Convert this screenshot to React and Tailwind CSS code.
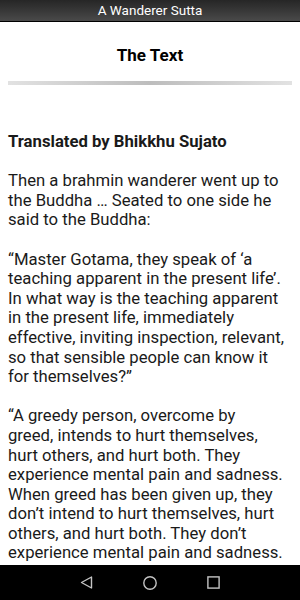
import React from "react";

const paragraphs = [
  "Then a brahmin wanderer went up to the Buddha … Seated to one side he said to the Buddha:",
  "“Master Gotama, they speak of ‘a teaching apparent in the present life’. In what way is the teaching apparent in the present life, immediately effective, inviting inspection, relevant, so that sensible people can know it for themselves?”",
  "“A greedy person, overcome by greed, intends to hurt themselves, hurt others, and hurt both. They experience mental pain and sadness. When greed has been given up, they don’t intend to hurt themselves, hurt others, and hurt both. They don’t experience mental pain and sadness.",
];

const App = () => {
  return (
    <div className="w-[300px] h-[600px] flex flex-col bg-white font-['Roboto',sans-serif] overflow-hidden">
      <div className="h-[22px] shrink-0 bg-gradient-to-b from-[#262626] to-[#4a4a4a] border-b border-black flex items-center justify-center">
        <p className="text-white text-[13.5px] leading-none">A Wanderer Sutta</p>
      </div>

      <div className="flex-1 overflow-hidden">
        <h1 className="text-center font-bold text-[17px] text-black mt-[23px] leading-[20px]">
          The Text
        </h1>
        <div className="mx-[8px] mt-[16px] h-[4px] bg-gradient-to-r from-[#e2e2e2] via-[#bdbdbd] to-[#e2e2e2]"></div>

        <div className="pl-[8px] pr-[16px] pt-[47px] text-[16.7px] leading-[19.6px] text-[#1a1a1a]">
          <p className="font-bold mb-[19.6px]">Translated by Bhikkhu Sujato</p>
          {paragraphs.map((text, i) => (
            <p key={i} className="mb-[19.6px]">
              {text}
            </p>
          ))}
        </div>
      </div>

      <div className="h-[35px] shrink-0 bg-black flex items-center justify-center gap-[50px]">
        <svg width="13" height="13" viewBox="0 0 13 13" fill="none" stroke="#c4c4c4" strokeWidth="1.4" strokeLinejoin="round">
          <path d="M11.5 1 L1.5 6.5 L11.5 12 Z" />
        </svg>
        <svg width="14" height="14" viewBox="0 0 14 14" fill="none" stroke="#c4c4c4" strokeWidth="1.4">
          <circle cx="7" cy="7" r="6.2" />
        </svg>
        <svg width="13" height="13" viewBox="0 0 13 13" fill="none" stroke="#c4c4c4" strokeWidth="1.4">
          <rect x="0.9" y="0.9" width="11.2" height="11.2" />
        </svg>
      </div>
    </div>
  );
};

export default App;
